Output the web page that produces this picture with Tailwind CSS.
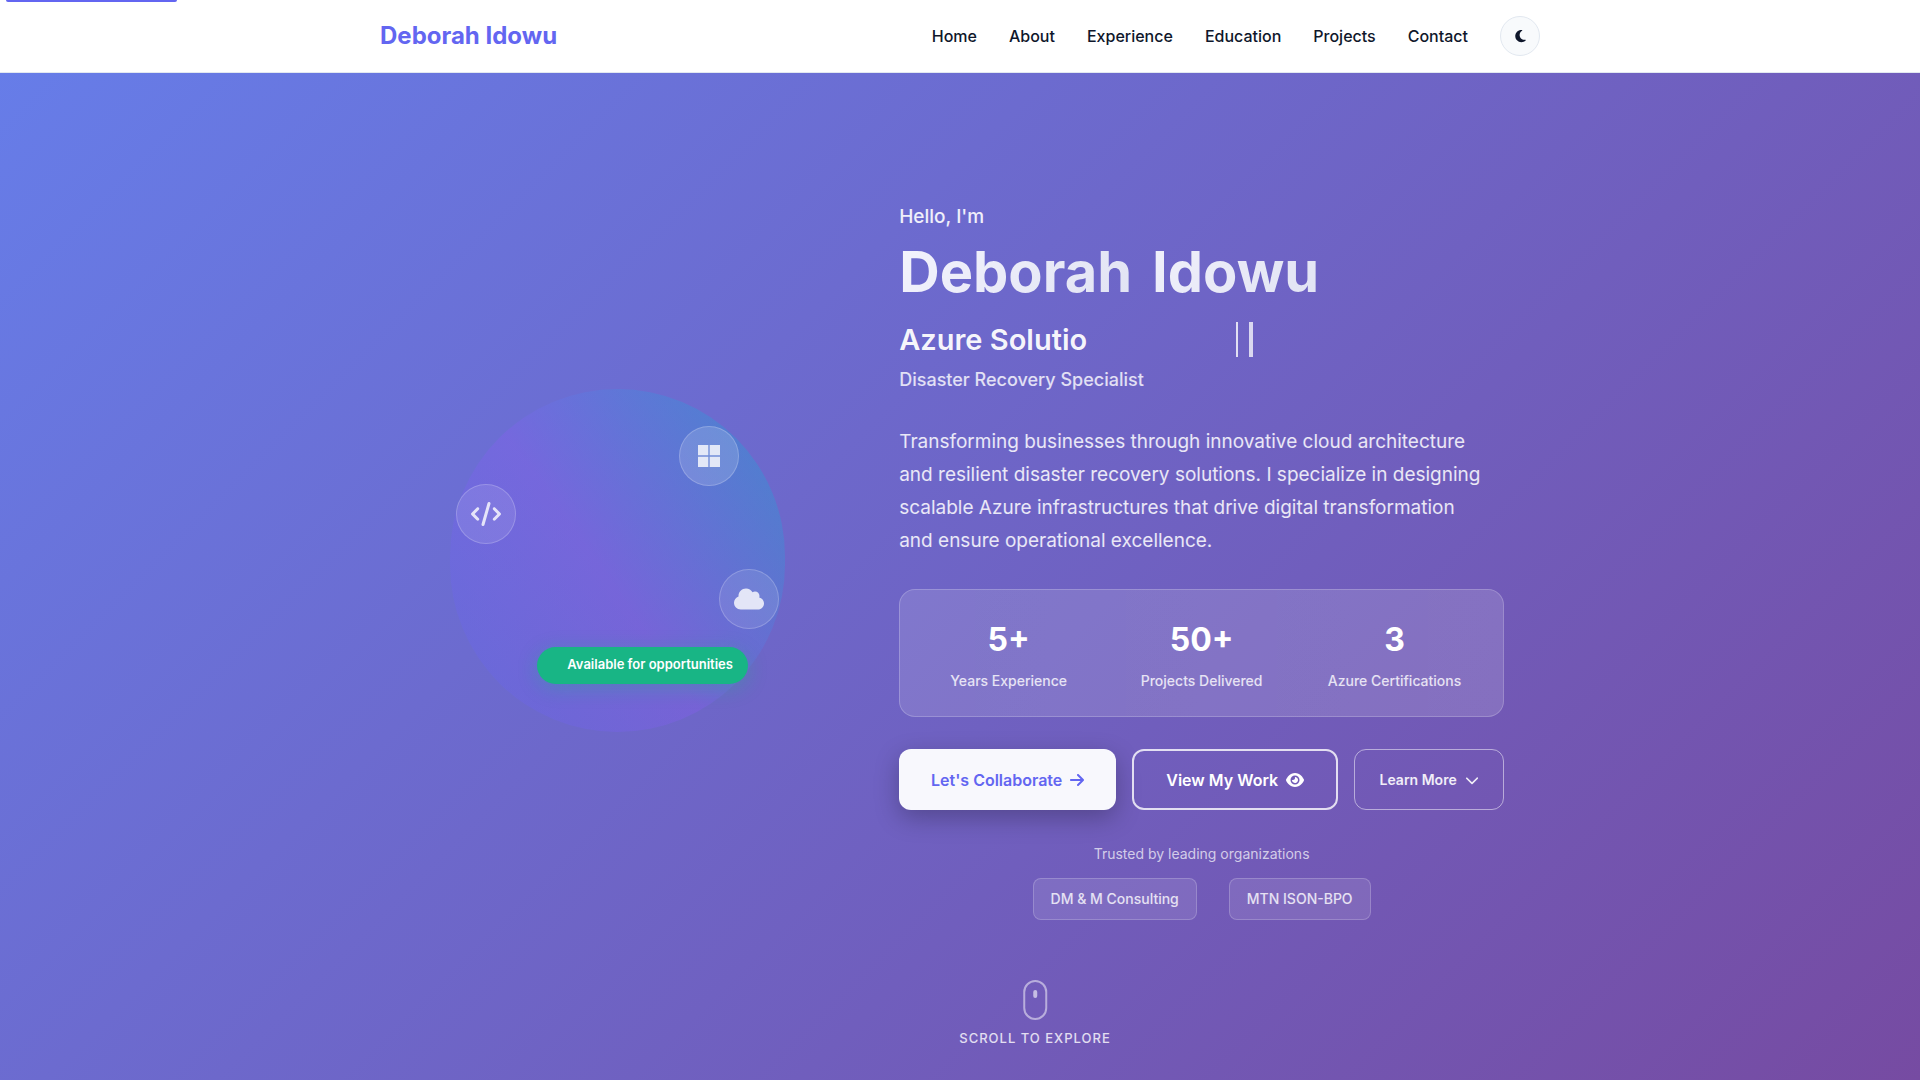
<!DOCTYPE html>
<html lang="en">
<head>
<meta charset="utf-8">
<meta name="viewport" content="width=device-width, initial-scale=1">
<title>Deborah Idowu</title>
<script src="https://cdn.jsdelivr.net/npm/@tailwindcss/browser@4"></script>
</head>
<body class="relative min-h-screen flex flex-col font-['Inter',sans-serif] text-slate-900 bg-[linear-gradient(135deg,#667eea_0%,#764ba2_100%)]">
<a href="#main" aria-label="Skip to main content" class="absolute z-10 left-[6px] top-0 h-[2px] w-[171px] rounded-b-sm bg-[#6366f1]"></a>

<header class="bg-white border-b border-slate-200">
  <nav class="mx-auto max-w-[1160px] h-[72px] flex items-center justify-between" aria-label="Main">
    <a href="#" class="text-2xl font-bold text-[#6366f1]">Deborah Idowu</a>
    <div class="flex items-center gap-8 text-base leading-[22px] font-medium">
      <a href="#home">Home</a>
      <a href="#about">About</a>
      <a href="#experience">Experience</a>
      <a href="#education">Education</a>
      <a href="#projects">Projects</a>
      <a href="#contact">Contact</a>
      <button type="button" aria-label="Toggle dark mode" class="size-10 rounded-full border border-slate-200 bg-slate-50 flex items-center justify-center">
        <svg class="h-[14px] w-[11px]" viewBox="0 0 384 512" fill="currentColor"><path d="M223.500 32C100 32 0 132.300 0 256s100 224 223.500 224c60.600 0 115.500-24.200 155.800-63.400 5-4.900 6.300-12.500 3.100-18.700s-10.100-9.700-17-8.500c-9.800 1.700-19.800 2.600-30.100 2.600-96.900 0-175.500-78.800-175.500-176 0-65.800 36-123.100 89.300-153.300 6.100-3.500 9.200-10.500 7.700-17.300s-7.300-11.900-14.300-12.500c-6.300-.5-12.600-.8-19-.8z"/></svg>
      </button>
    </div>
  </nav>
</header>

<main id="main" class="relative flex-1 flex items-center justify-center pt-[46px] pb-[78px]">
  <div class="w-full max-w-[1088px] grid grid-cols-[2fr_3fr] gap-20 items-center">
    <div class="relative h-[400px] w-[400px] mx-auto">
      <div class="absolute left-[32px] top-[28px] w-[335px] h-[343px] rounded-full opacity-30 bg-[linear-gradient(55deg,#6366f1_8%,#8b5cf6_46%,#06b6d4_92%)]"></div>
      <div class="absolute left-[261px] top-[65px] size-[60px] rounded-full border border-white/20 bg-white/15 flex items-center justify-center text-white/80">
        <svg class="size-[22px]" viewBox="0 0 22 22" fill="currentColor"><path d="M0 0h10.300v10.300H0zM11.700 0H22v10.300H11.700zM0 11.700h10.300V22H0zM11.700 11.700H22V22H11.700z"/></svg>
      </div>
      <div class="absolute left-[38px] top-[123px] size-[60px] rounded-full border border-white/20 bg-white/10 flex items-center justify-center text-white/80">
        <svg class="w-[30px] h-6" viewBox="0 0 640 512" fill="currentColor"><path d="M392.800 1.200c-17-4.900-34.700 5-39.600 22l-128 448c-4.900 17 5 34.700 22 39.600s34.700-5 39.600-22l128-448c4.900-17-5-34.700-22-39.600zm80.600 120.100c-12.500 12.500-12.500 32.800 0 45.300l89.300 89.400-89.400 89.400c-12.500 12.500-12.500 32.800 0 45.300s32.800 12.500 45.300 0l112-112c12.500-12.500 12.500-32.800 0-45.300l-112-112c-12.500-12.500-32.800-12.500-45.300 0zm-306.700 0c-12.500-12.500-32.800-12.500-45.300 0l-112 112c-12.500 12.500-12.500 32.800 0 45.300l112 112c12.500 12.500 32.800 12.500 45.300 0s12.500-32.800 0-45.300L77.300 256l89.400-89.400c12.500-12.500 12.500-32.800 0-45.300z"/></svg>
      </div>
      <div class="absolute left-[301px] top-[208px] size-[60px] rounded-full border border-white/20 bg-white/10 flex items-center justify-center text-white/80">
        <svg class="w-[30px] h-6" viewBox="0 0 640 512" fill="currentColor"><path d="M0 336c0 79.500 64.500 144 144 144h368c70.700 0 128-57.300 128-128 0-61.900-44-113.600-102.400-125.400 4.100-10.700 6.400-22.400 6.400-34.600 0-53-43-96-96-96-19.700 0-38.100 6-53.300 16.200C367 64.200 315.300 32 256 32c-88.400 0-160 71.600-160 160 0 2.700.1 5.400.2 8.100C40.200 219.800 0 273.200 0 336z"/></svg>
      </div>
      <div class="absolute left-[119px] top-[286px] h-[37px] w-[211px] pl-8 pr-4 rounded-full bg-[#18b585] text-white text-[13px] font-semibold whitespace-nowrap flex items-center justify-center shadow-[0_4px_20px_rgba(16,185,129,0.3)]">Available for opportunities</div>
    </div>

    <div class="flex flex-col">
      <p class="text-[19px] leading-8 font-medium text-white/90">Hello, I'm</p>
      <h1 class="mt-2 flex gap-5 text-[56px] leading-[62px] font-bold">
        <span class="bg-[linear-gradient(135deg,#f3f3fd,#e1e3f3)] bg-clip-text text-transparent">Deborah</span>
        <span class="bg-[linear-gradient(135deg,#f0f0fb,#e1e3f3)] bg-clip-text text-transparent">Idowu</span>
      </h1>
      <div class="mt-3 flex items-center h-12 text-[29px] font-semibold text-white/95">
        <p class="w-[339px] h-[35px] leading-[35px] border-r-2 border-white/80">Azure Solutio</p>
        <span class="ml-[11px] h-[35px] w-1 bg-white/75"></span>
      </div>
      <p class="mt-1 text-lg leading-[26px] font-medium text-white/80">Disaster Recovery Specialist</p>
      <p class="mt-8 pr-3 text-[19px] leading-[33px] text-white/85">Transforming businesses through innovative cloud architecture and resilient disaster recovery solutions. I specialize in designing scalable Azure infrastructures that drive digital transformation and ensure operational excellence.</p>
      <dl class="mt-8 grid grid-cols-3 gap-10 px-8 py-6 h-[128px] rounded-2xl border border-white/20 bg-[linear-gradient(90deg,#ffffff20,#ffffff24)] text-center">
        <div class="flex flex-col-reverse justify-end gap-3 items-center"><dt class="text-sm leading-6 font-medium text-white/80 whitespace-nowrap">Years Experience</dt><dd class="text-[32px] leading-[51px] -mb-2 font-bold text-white">5+</dd></div>
        <div class="flex flex-col-reverse justify-end gap-3 items-center"><dt class="text-sm leading-6 font-medium text-white/80 whitespace-nowrap">Projects Delivered</dt><dd class="text-[32px] leading-[51px] -mb-2 font-bold text-white">50+</dd></div>
        <div class="flex flex-col-reverse justify-end gap-3 items-center"><dt class="text-sm leading-6 font-medium text-white/80 whitespace-nowrap">Azure Certifications</dt><dd class="text-[32px] leading-[51px] -mb-2 font-bold text-white">3</dd></div>
      </dl>
      <div class="mt-8 h-[61px] flex gap-4 font-semibold whitespace-nowrap">
        <button type="button" class="w-[217px] rounded-xl bg-[#f8f8fd] text-[#6366f1] flex items-center justify-center gap-2 shadow-[0_8px_25px_rgba(0,0,0,0.25)]">Let's Collaborate
          <svg class="w-[14px] h-4" viewBox="0 0 448 512" fill="currentColor"><path d="M438.600 278.600c12.500-12.500 12.500-32.800 0-45.300l-160-160c-12.500-12.500-32.800-12.500-45.300 0s-12.500 32.800 0 45.300L338.800 224H32c-17.700 0-32 14.300-32 32s14.300 32 32 32h306.700L233.400 393.400c-12.500 12.500-12.500 32.800 0 45.300s32.800 12.500 45.300 0l160-160z"/></svg>
        </button>
        <button type="button" class="w-[206px] rounded-xl border-2 border-white/80 text-white flex items-center justify-center gap-2">View My Work
          <svg class="w-[18px] h-4" viewBox="0 0 576 512" fill="currentColor"><path fill-rule="evenodd" d="M288 32c-80.800 0-145.500 36.800-192.600 80.600C48.600 156 17.300 208 2.500 243.700c-3.300 7.900-3.300 16.700 0 24.600C17.300 304 48.600 356 95.400 399.400 142.500 443.200 207.200 480 288 480s145.500-36.800 192.600-80.600c46.800-43.500 78.100-95.400 93-131.100 3.300-7.900 3.300-16.700 0-24.600-14.900-35.700-46.200-87.700-93-131.100C433.500 68.800 368.800 32 288 32zM144 256a144 144 0 1 1 288 0 144 144 0 1 1-288 0zm144-64c0 35.300-28.700 64-64 64-7.100 0-13.900-1.200-20.300-3.300-5.500-1.800-11.900 1.600-11.700 7.400.3 6.900 1.300 13.800 3.200 20.700 13.700 51.200 66.400 81.600 117.600 67.900s81.600-66.400 67.900-117.600c-11.100-41.500-47.800-69.400-88.600-71.100-5.800-.2-9.200 6.100-7.400 11.700 2.100 6.400 3.300 13.200 3.300 20.300z"/></svg>
        </button>
        <button type="button" class="flex-1 rounded-xl border border-white/50 text-white/90 text-sm font-semibold flex items-center justify-center gap-2">Learn More
          <svg class="w-[14px] h-4" viewBox="0 0 512 512" fill="currentColor"><path d="M233.400 406.600c12.500 12.500 32.800 12.500 45.300 0l192-192c12.500-12.500 12.500-32.800 0-45.300s-32.800-12.500-45.300 0L256 338.700 86.600 169.400c-12.500-12.500-32.800-12.500-45.300 0s-12.500 32.800 0 45.300l192 192z"/></svg>
        </button>
      </div>
      <div class="mt-8 text-center text-sm">
        <p class="leading-6 text-white/70">Trusted by leading organizations</p>
        <div class="mt-3 flex justify-center gap-8 font-medium text-white/80">
          <span class="h-[42px] px-[17px] flex items-center rounded-lg border border-white/20 bg-white/10">DM &amp; M Consulting</span>
          <span class="h-[42px] px-[17px] flex items-center rounded-lg border border-white/20 bg-white/10">MTN ISON-BPO</span>
        </div>
      </div>
    </div>
  </div>

  <a href="#about" class="absolute bottom-[32px] left-[calc(50%_+_75px)] -translate-x-1/2 flex flex-col items-center gap-2 text-white/80">
    <span class="w-6 h-10 rounded-full border-2 border-white/50 flex justify-center pt-2"><span class="w-1 h-2 rounded-full bg-white/60"></span></span>
    <span class="text-[13px] leading-5 font-medium tracking-[1px] uppercase whitespace-nowrap">Scroll to explore</span>
  </a>
</main>
</body>
</html>
